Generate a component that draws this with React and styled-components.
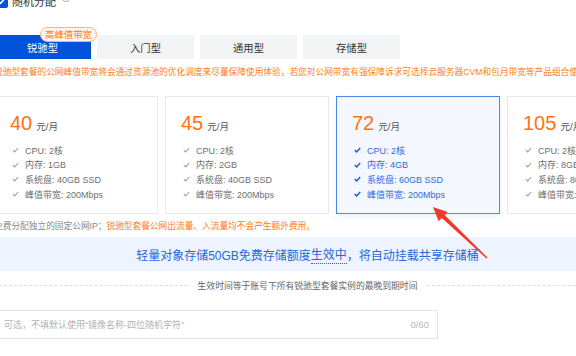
import React from 'react';
import styled, { createGlobalStyle } from 'styled-components';

const GlobalStyle = createGlobalStyle`
  html, body {
    margin: 0;
    padding: 0;
    background: #fff;
    overflow: hidden;
  }
  body {
    font-family: "Liberation Sans", "Noto Sans CJK SC", sans-serif;
  }
`;

const plans = [
  { price: 40, mem: '1GB', disk: '40GB SSD' },
  { price: 45, mem: '2GB', disk: '40GB SSD' },
  { price: 72, mem: '4GB', disk: '60GB SSD', active: true },
  { price: 105, mem: '8GB', disk: '80GB SSD' },
];

const tabs = ['锐驰型', '入门型', '通用型', '存储型'];

const Page = styled.div`
  position: relative;
  width: 627px;
  margin: -6px 0 0 -6px;
`;

const TopRow = styled.div`
  display: flex;
  align-items: center;
  height: 14px;
`;

const Checkbox = styled.span`
  width: 14px;
  height: 14px;
  border-radius: 2px;
  background: #0052d9;
  display: flex;
  align-items: center;
  justify-content: center;
`;

const CheckLabel = styled.span`
  margin-left: 4px;
  font-size: 11px;
  color: #333;
`;

const Help = styled.span`
  margin-left: 5px;
  width: 8px;
  height: 8px;
  border: 1px solid #aaa;
  border-radius: 50%;
  margin-top: -8px;
`;

const TabRow = styled.div`
  display: flex;
  gap: 6px;
  margin-top: 27px;
`;

const Tab = styled.div`
  position: relative;
  width: 97px;
  height: 24px;
  display: flex;
  align-items: center;
  justify-content: center;
  font-size: 10.3px;
  background: ${p => (p.$active ? '#0052d9' : '#f2f3f5')};
  color: ${p => (p.$active ? '#fff' : '#333')};
`;

const Badge = styled.span`
  position: absolute;
  top: -8px;
  left: 46px;
  height: 15px;
  padding: 0 4px;
  box-sizing: border-box;
  border: 1px solid #ffb27a;
  border-radius: 8px;
  background: #fff4ea;
  color: #ff7a1a;
  font-size: 9.4px;
  line-height: 13px;
  white-space: nowrap;
  z-index: 1;
`;

const Warning = styled.div`
  margin-top: 7px;
  font-size: 8.7px;
  line-height: 12px;
  color: #ff7d1a;
  white-space: nowrap;
`;

const CardRow = styled.div`
  display: flex;
  gap: 7px;
  margin-top: 18px;
`;

const Card = styled.div`
  flex: none;
  width: 164px;
  height: 118px;
  box-sizing: border-box;
  padding: 14px 0 0 15px;
  border: 1px solid ${p => (p.$active ? '#4a86f0' : '#e7e8ec')};
  background: ${p => (p.$active ? '#f4f7fe' : '#fff')};
  box-shadow: ${p => (p.$active ? '0 3px 8px rgba(0, 82, 217, 0.08)' : 'none')};
`;

const Price = styled.div`
  display: flex;
  align-items: baseline;
  gap: 4px;
  height: 24px;
  line-height: 24px;
  font-size: 20px;
  color: #ff7214;
`;

const Unit = styled.span`
  font-size: 9.6px;
  color: #555;
`;

const Features = styled.ul`
  list-style: none;
  margin: 8px 0 0;
  padding: 0 0 0 2px;
`;

const Feature = styled.li`
  display: flex;
  align-items: center;
  gap: 6px;
  height: 14.6px;
  font-size: 9px;
  color: ${p => (p.$active ? '#2f6ae0' : '#6e6e6e')};
  white-space: nowrap;
`;

const Note = styled.div`
  margin-top: 6px;
  font-size: 8.7px;
  line-height: 12px;
  color: #888;
  white-space: nowrap;
`;

const Orange = styled.span`
  color: #ff7d1a;
`;

const Band = styled.div`
  margin-top: 5px;
  height: 34px;
  background: #edf4ff;
  display: flex;
  align-items: center;
  justify-content: center;
  font-size: 12px;
  color: #2a66db;
  white-space: nowrap;
`;

const Dotted = styled.span`
  border-bottom: 1px dotted #2a66db;
  padding-bottom: 1px;
`;

const DividerRow = styled.div`
  margin-top: 8px;
  display: flex;
  align-items: center;
  gap: 10px;
  height: 12px;
  font-size: 8.8px;
  color: #666;
  white-space: nowrap;
`;

const Line = styled.span`
  flex: 1;
  border-top: 1px dashed #ddd;
`;

const InputBox = styled.div`
  margin-top: 19px;
  width: 444px;
  height: 29px;
  box-sizing: border-box;
  border: 1px solid #e3e5ea;
  display: flex;
  align-items: center;
  padding: 0 8px 0 9px;
`;

const Input = styled.input`
  flex: 1;
  border: none;
  outline: none;
  padding: 0;
  background: transparent;
  font-family: inherit;
  font-size: 9px;
  &::placeholder {
    color: #b2b2b2;
  }
`;

const Counter = styled.span`
  font-size: 9.5px;
  color: #b5b5b5;
`;

const Arrow = styled.svg`
  position: absolute;
  left: 6px;
  top: 6px;
  pointer-events: none;
`;

const Tick = ({ color, bold }) => (
  <svg width="7" height="6" viewBox="0 0 7 6">
    <path d="M0.8 3.1 L2.7 4.9 L6.2 1" fill="none" stroke={color} strokeWidth={bold ? 1.5 : 1.1} />
  </svg>
);

function App() {
  return (
    <>
      <GlobalStyle />
      <Page>
        <TopRow>
          <Checkbox>
            <svg width="9" height="8" viewBox="0 0 9 8">
              <path d="M1 4 L3.5 6.4 L8 1.4" fill="none" stroke="#fff" strokeWidth="1.6" />
            </svg>
          </Checkbox>
          <CheckLabel>随机分配</CheckLabel>
          <Help />
        </TopRow>

        <TabRow>
          {tabs.map((t, i) => (
            <Tab key={t} $active={i === 0}>
              {i === 0 && <Badge>高峰值带宽</Badge>}
              {t}
            </Tab>
          ))}
        </TabRow>

        <Warning>
          锐驰型套餐的公网峰值带宽将会通过资源池的优化调度来尽量保障使用体验，若您对公网带宽有强保障诉求可选择云服务器CVM和包月带宽等产品组合使用
        </Warning>

        <CardRow>
          {plans.map(p => (
            <Card key={p.price} $active={p.active}>
              <Price>
                {p.price}
                <Unit>元/月</Unit>
              </Price>
              <Features>
                {[`CPU: 2核`, `内存: ${p.mem}`, `系统盘: ${p.disk}`, '峰值带宽: 200Mbps'].map(f => (
                  <Feature key={f} $active={p.active}>
                    <Tick color={p.active ? '#1f5fd6' : '#a0a0a0'} bold={p.active} />
                    {f}
                  </Feature>
                ))}
              </Features>
            </Card>
          ))}
        </CardRow>

        <Note>
          免费分配独立的固定公网IP；<Orange>锐驰型套餐公网出流量、入流量均不会产生额外费用。</Orange>
        </Note>

        <Band>
          轻量对象存储50GB免费存储额度<Dotted>生效中</Dotted>，将自动挂载共享存储桶
        </Band>

        <DividerRow>
          <Line />
          生效时间等于账号下所有锐驰型套餐实例的最晚到期时间
          <Line />
        </DividerRow>

        <InputBox>
          <Input placeholder="可选，不填默认使用“镜像名称-四位随机字符”" />
          <Counter>0/60</Counter>
        </InputBox>

        <Arrow width="576" height="356" viewBox="0 0 576 356">
          <polygon
            points="433,207 447.7,211.9 444.6,215.1 487.5,257.5 486.5,258.5 441.8,218.1 438.7,221.3"
            fill="#f2382b"
          />
        </Arrow>
      </Page>
    </>
  );
}

export default App;
